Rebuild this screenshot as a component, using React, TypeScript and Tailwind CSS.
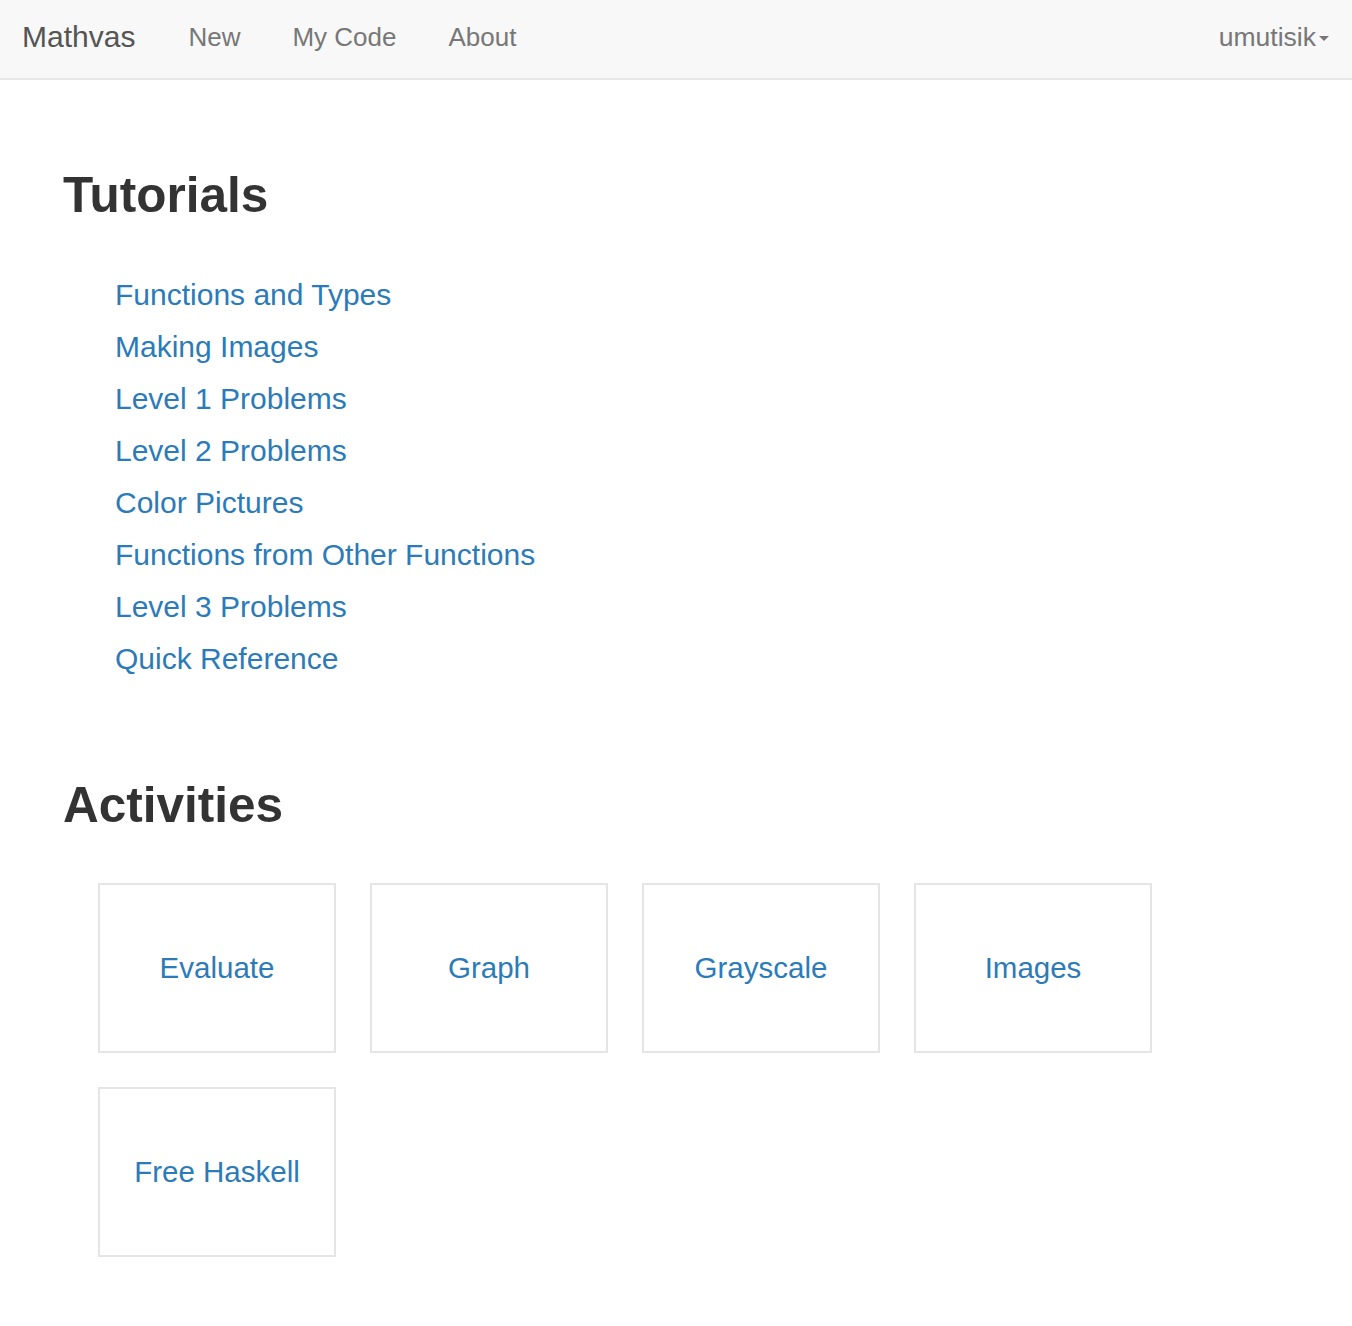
import React from "react";

const tutorials = [
  "Functions and Types",
  "Making Images",
  "Level 1 Problems",
  "Level 2 Problems",
  "Color Pictures",
  "Functions from Other Functions",
  "Level 3 Problems",
  "Quick Reference",
];

const activities = ["Evaluate", "Graph", "Grayscale", "Images", "Free Haskell"];

export default function App() {
  return (
    <div
      className="min-h-screen bg-white"
      style={{ fontFamily: '"Liberation Sans", Arial, Helvetica, sans-serif' }}
    >
      <nav className="h-[80px] bg-[#f8f8f8] border-b-2 border-[#e7e7e7]">
        <div className="flex h-[78px] items-center pb-1">
          <a className="pl-[22px] pr-[27px] text-[30px] text-[#555555] leading-none">Mathvas</a>
          <a className="px-[26px] text-[26px] text-[#777777] leading-none">New</a>
          <a className="px-[26px] text-[26px] text-[#777777] leading-none">My Code</a>
          <a className="px-[26px] text-[26px] text-[#777777] leading-none">About</a>
          <div className="ml-auto flex items-center pr-[23px]">
            <span className="text-[26.5px] text-[#777777] leading-none">umutisik</span>
            <span className="ml-[3px] mt-[3px] h-0 w-0 border-x-[5px] border-t-[5px] border-x-transparent border-t-[#777777]" />
          </div>
        </div>
      </nav>

      <main className="pl-[63px] pt-[85px]">
        <h1 className="h-[60px] text-[49.5px] font-bold leading-[60px] text-[#333333]">Tutorials</h1>
        <ul className="mt-[44px] pl-[52px]">
          {tutorials.map((t) => (
            <li key={t} className="h-[52px] text-[30px] leading-[52px] text-[#2b7bb9]">
              <a>{t}</a>
            </li>
          ))}
        </ul>

        <h1 className="mt-[90px] h-[60px] text-[49.5px] font-bold leading-[60px] text-[#333333]">Activities</h1>
        <div className="mt-[48px] ml-[35px] grid w-[1054px] grid-cols-[repeat(4,238px)] gap-[34px]">
          {activities.map((a) => (
            <div
              key={a}
              className="flex h-[170px] w-[238px] items-center justify-center border-2 border-[#e5e5e5]"
            >
              <a className="mt-[1px] text-[29.5px] text-[#2b7bb9]">{a}</a>
            </div>
          ))}
        </div>
      </main>
    </div>
  );
}
